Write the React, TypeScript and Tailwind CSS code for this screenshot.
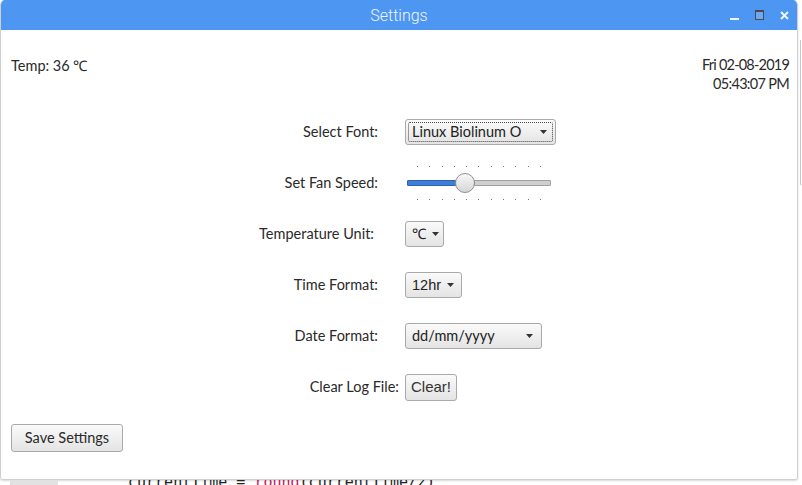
import React from 'react';

const labelFont = { fontFamily: 'Lato, "Open Sans", sans-serif' };

const Caret = () => (
  <svg width="7" height="4" viewBox="0 0 7 4" className="shrink-0">
    <path d="M0 0h7L3.5 4z" fill="#333" />
  </svg>
);

const DropButton: React.FC<{ text: string; width: string; focused?: boolean; sans?: boolean }> = ({ text, width, focused, sans }) => (
  <div
    className={`${width} h-[26px] rounded-[3px] border border-[#a9a9a9] bg-gradient-to-b from-[#fafafa] to-[#e4e4e4] p-[2px] flex`}
  >
    <div
      className={`flex-1 flex items-center justify-between gap-[6px] pl-[3px] pr-[5px] rounded-[2px] border ${focused ? 'border-dotted border-[#444]' : 'border-transparent'}`}
    >
      <span
        className="text-[14.5px] text-[#222] leading-none"
        style={sans ? { fontFamily: '"Liberation Sans", Arial, sans-serif' } : labelFont}
      >
        {text}
      </span>
      <Caret />
    </div>
  </div>
);

const Row: React.FC<{ label: string; pr: string; children: React.ReactNode }> = ({ label, pr, children }) => (
  <div className="flex items-center h-[26px]">
    <div className={`w-[404px] text-right ${pr} text-[14.5px] text-[#2a2a2a]`} style={labelFont}>
      {label}
    </div>
    {children}
  </div>
);

const ticks = Array.from({ length: 11 }, (_, i) => i);

const Slider = () => (
  <div className="ml-[2px] w-[144px] flex flex-col">
    <div className="flex justify-between px-[10px] h-[6px] items-start">
      {ticks.map((t) => (
        <span key={t} className="w-[1px] h-[1px] bg-[#777]" />
      ))}
    </div>
    <div className="flex items-center h-[22px]">
      <div className="w-[49px] h-[6px] bg-[#3c7fd8] border border-[#2d63ab] rounded-l-[1px]" />
      <div className="w-[20px] h-[20px] -mx-[1px] rounded-full border border-[#8f8f8f] bg-gradient-to-b from-[#f8f8f8] to-[#d6d6d6] z-10 shrink-0" />
      <div className="flex-1 h-[6px] bg-[#cfcfcf] border border-[#a0a0a0] rounded-r-[1px]" />
    </div>
    <div className="flex justify-between px-[10px] h-[6px] items-end">
      {ticks.map((t) => (
        <span key={t} className="w-[1px] h-[1px] bg-[#777]" />
      ))}
    </div>
  </div>
);

export default function App() {
  return (
    <div className="w-[802px] h-[485px] bg-white overflow-hidden flex flex-col">
      <div className="flex h-[480px]">
        {/* window */}
        <div className="w-[798px] h-[480px] flex flex-col rounded-t-[5px] rounded-b-[3px] border-l border-r border-b border-[#cfcfcf] shadow-[0_1px_2px_rgba(0,0,0,0.15)] overflow-hidden">
          <div className="h-[30px] bg-[#4d97f2] flex items-center relative shrink-0">
            <div
              className="flex-1 text-center text-[16px] font-light text-[#eef5ff] pt-[1px]"
              style={{ fontFamily: 'Roboto, "Open Sans", sans-serif' }}
            >
              Settings
            </div>
            <div className="absolute right-[8px] top-[10px] flex items-center gap-[16px]">
              <span className="w-[9px] h-[2px] bg-[#eef5ff] mt-[7px]" />
              <span className="w-[9px] h-[10px] border border-[#4a4a4a] border-t-[2px] bg-[#eef5ff]/20" />
              <svg width="9" height="9" viewBox="0 0 9 9">
                <path d="M1 1l7 7M8 1l-7 7" stroke="#eef5ff" strokeWidth="2" />
              </svg>
            </div>
          </div>

          <div className="flex-1 bg-white flex flex-col">
            <div className="flex justify-between items-start pt-[25px] pl-[10px] pr-[8px] text-[14.5px] text-[#2a2a2a] leading-[19px]" style={labelFont}>
              <div className="pt-[1px]">Temp: 36 ℃</div>
              <div className="text-right">
                <div className="tracking-[-0.8px]">Fri 02-08-2019</div>
                <div className="tracking-[-0.7px]">05:43:07 PM</div>
              </div>
            </div>

            <div className="flex flex-col gap-[25px] mt-[26px]">
              <Row label="Select Font:" pr="pr-[27px]">
                <DropButton text="Linux Biolinum O" width="w-[151px]" focused />
              </Row>
              <Row label="Set Fan Speed:" pr="pr-[27px]">
                <Slider />
              </Row>
              <Row label="Temperature Unit:" pr="pr-[31px]">
                <DropButton text="℃" width="w-[39px]" />
              </Row>
              <Row label="Time Format:" pr="pr-[27px]">
                <DropButton text="12hr" width="w-[57px]" sans />
              </Row>
              <Row label="Date Format:" pr="pr-[27px]">
                <DropButton text="dd/mm/yyyy" width="w-[137px]" />
              </Row>
              <Row label="Clear Log File:" pr="pr-[6px]">
                <button
                  className="h-[27px] w-[52px] rounded-[3px] border border-[#a9a9a9] bg-gradient-to-b from-[#fafafa] to-[#e4e4e4] text-[15px] text-[#333]"
                  style={{ fontFamily: '"Liberation Sans", Arial, sans-serif' }}
                >
                  Clear!
                </button>
              </Row>
            </div>

            <div className="pl-[10px] mt-[24px]">
              <button
                className="h-[28px] w-[112px] rounded-[3px] border border-[#a9a9a9] bg-gradient-to-b from-[#fafafa] to-[#e4e4e4] text-[14.5px] text-[#2a2a2a]"
                style={labelFont}
              >
                Save Settings
              </button>
            </div>
          </div>
        </div>
        {/* strip of desktop behind */}
        <div className="flex-1 pt-[40px] flex justify-center">
          <div className="w-[1px] h-[145px] bg-[#c8c8c8]" />
        </div>
      </div>

      {/* editor text peeking under the window */}
      <div className="h-[5px] overflow-hidden flex items-start">
        <div className="ml-[10px] w-[48px] h-[5px] bg-[#e2e2e2]" />
        <div
          className="ml-[70px] -mt-[9px] text-[15px] text-[#222] whitespace-pre"
          style={{ fontFamily: '"DejaVu Sans Mono", monospace' }}
        >
          currentTime = <span className="text-[#c2185b]">round</span>(currentTime/2)
        </div>
      </div>
    </div>
  );
}
